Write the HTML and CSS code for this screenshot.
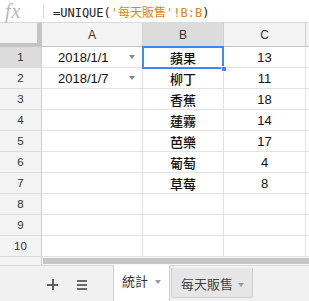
FILE: index.html
```html
<!DOCTYPE html>
<html>
<head>
<meta charset="utf-8">
<link rel="stylesheet" href="styles.css">
</head>
<body>
<div class="app">
  <div class="fbar">
    <span class="fx">fx</span>
    <span class="sep"></span>
    <span class="formula">=UNIQUE(<span class="ref">'每天販售'!B:B</span>)</span>
  </div>
  <div class="grid">
    <div class="corner"></div>
    <div class="ch">A</div>
    <div class="ch sel-h">B</div>
    <div class="ch">C</div>
    <div class="ch last"></div>

    <div class="rh sel-h">1</div>
    <div class="c a">2018/1/1<span class="dd"></span></div>
    <div class="c b">蘋果</div>
    <div class="c n">13</div>
    <div class="c last"></div>

    <div class="rh">2</div>
    <div class="c a">2018/1/7<span class="dd"></span></div>
    <div class="c b">柳丁</div>
    <div class="c n">11</div>
    <div class="c last"></div>

    <div class="rh">3</div>
    <div class="c a"></div>
    <div class="c b">香蕉</div>
    <div class="c n">18</div>
    <div class="c last"></div>

    <div class="rh">4</div>
    <div class="c a"></div>
    <div class="c b">蓮霧</div>
    <div class="c n">14</div>
    <div class="c last"></div>

    <div class="rh">5</div>
    <div class="c a"></div>
    <div class="c b">芭樂</div>
    <div class="c n">17</div>
    <div class="c last"></div>

    <div class="rh">6</div>
    <div class="c a"></div>
    <div class="c b">葡萄</div>
    <div class="c n">4</div>
    <div class="c last"></div>

    <div class="rh">7</div>
    <div class="c a"></div>
    <div class="c b">草莓</div>
    <div class="c n">8</div>
    <div class="c last"></div>

    <div class="rh">8</div>
    <div class="c a"></div>
    <div class="c b"></div>
    <div class="c n"></div>
    <div class="c last"></div>

    <div class="rh">9</div>
    <div class="c a"></div>
    <div class="c b"></div>
    <div class="c n"></div>
    <div class="c last"></div>

    <div class="rh">10</div>
    <div class="c a"></div>
    <div class="c b"></div>
    <div class="c n"></div>
    <div class="c last"></div>

    <div class="sel"><span class="handle"></span></div>
  </div>
  <div class="hscroll">
    <div class="hs-corner"></div>
    <div class="hs-track"><div class="hs-thumb"></div></div>
  </div>
  <div class="tabs">
    <span class="plus"></span>
    <span class="list"><i></i><i></i><i></i></span>
    <div class="tab active">統計<span class="tdd"></span></div>
    <div class="tab">每天販售<span class="tdd"></span></div>
  </div>
</div>
</body>
</html>
```
FILE: styles.css
```css
* { box-sizing: border-box; }
html, body { margin: 0; padding: 0; background: #fff; }
body { width: 309px; height: 301px; overflow: hidden; font-family: "Liberation Sans", Arial, "Noto Sans CJK TC", sans-serif; color: #222; }
.app { width: 309px; height: 301px; display: flex; flex-direction: column; }

.fbar { height: 23px; border-bottom: 1px solid #dadada; display: flex; align-items: center; flex-shrink: 0; }
.fx { width: 36px; height: 22px; padding-left: 5px; font-family: "Liberation Serif", serif; font-style: italic; font-size: 20px; color: #b8b8b8; line-height: 22px; letter-spacing: 1px; white-space: nowrap; }
.sep { width: 1px; height: 14px; background: #d8d8d8; margin-left: 7px; margin-right: 9px; }
.formula { font-family: "DejaVu Sans Mono", "Noto Sans CJK TC", monospace; font-size: 12px; color: #222; white-space: nowrap; }
.ref { color: #e8820c; }

.grid { position: relative; display: grid; grid-template-columns: 42px 101px 81px 82px 1fr; grid-template-rows: 24px repeat(10, 21px); flex-shrink: 0; }
.corner { background: #f3f3f3; border-right: 5px solid #c4c4c4; border-bottom: 4px solid #c4c4c4; }
.ch { background: #f3f3f3; border-right: 1px solid #cfcfcf; border-bottom: 1px solid #c4c4c4; display: flex; align-items: center; justify-content: center; font-size: 12px; color: #333; padding-top: 1px; }
.ch.last { border-right: none; }
.sel-h { background: #dcdcdc; }
.rh { background: #f3f3f3; border-right: 1px solid #cfcfcf; border-bottom: 1px solid #dcdcdc; display: flex; align-items: center; justify-content: center; font-size: 11.5px; color: #333; }
.rh.sel-h { background: #dcdcdc; }
.c { border-right: 1px solid #e2e2e2; border-bottom: 1px solid #e2e2e2; display: flex; align-items: center; font-size: 13px; color: #111; white-space: nowrap; }
.c.last { border-right: none; }
.a { padding-left: 16px; position: relative; }
.dd { position: absolute; right: 7px; top: 8px; width: 0; height: 0; border-left: 3.5px solid transparent; border-right: 3.5px solid transparent; border-top: 4px solid #888; }
.b { justify-content: center; font-family: "Noto Sans CJK TC", sans-serif; font-size: 13px; font-weight: 500; }
.n { justify-content: center; }

.sel { position: absolute; left: 142px; top: 23px; width: 82px; height: 23px; border: 2px solid #4285f4; pointer-events: none; }
.handle { position: absolute; right: -5px; bottom: -5px; width: 6px; height: 6px; background: #4285f4; border: 1px solid #fff; }

.hscroll { height: 8px; display: flex; flex-shrink: 0; }
.hs-corner { width: 42px; background: #f3f3f3; border-right: 1px solid #cfcfcf; }
.hs-track { flex: 1; padding: 1px 0 0 1px; background: #f8f8f8; }
.hs-thumb { height: 6px; background: #c6c6c6; }

.tabs { flex: 1; background: #f1f1f1; display: flex; align-items: flex-start; border-top: 1px solid #dadada; position: relative; }
.plus { position: absolute; left: 47px; top: 13px; width: 11px; height: 11px; }
.plus::before { content: ""; position: absolute; left: 0; top: 4.5px; width: 11px; height: 2px; background: #5f5f5f; }
.plus::after { content: ""; position: absolute; left: 4.5px; top: 0; width: 2px; height: 11px; background: #5f5f5f; }
.list { position: absolute; left: 77px; top: 14px; width: 10px; display: flex; flex-direction: column; gap: 2px; }
.list i { display: block; height: 2px; background: #6a6a6a; }
.tab { position: relative; font-family: "Noto Sans CJK TC", sans-serif; font-size: 13px; color: #333; }
.tab.active { margin-left: 113px; margin-top: -1px; width: 57px; height: 37px; background: #fff; border-left: 1px solid #cfcfcf; border-right: 1px solid #cfcfcf; padding: 6px 0 0 8px; }
.tab:not(.active) { margin-left: 1px; margin-top: 2px; width: 82px; height: 30px; background: #e6e6e6; border: 1px solid #cdcdcd; border-top: none; border-radius: 0 0 3px 3px; padding: 6px 0 0 9px; color: #444; }
.tdd { position: absolute; top: 15px; width: 0; height: 0; border-left: 3.5px solid transparent; border-right: 3.5px solid transparent; border-top: 4px solid #999; }
.tab.active .tdd { right: 8px; }
.tab:not(.active) .tdd { right: 8px; }
```
